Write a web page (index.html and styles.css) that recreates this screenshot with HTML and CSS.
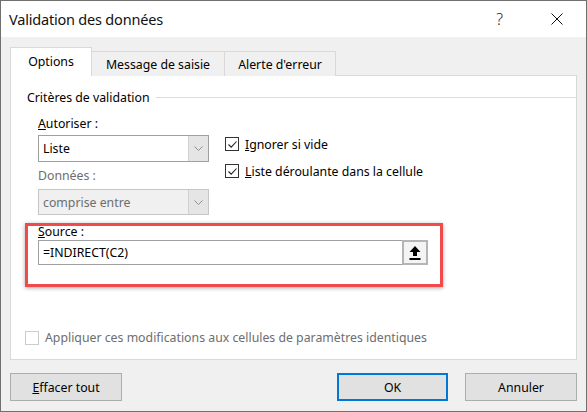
FILE: index.html
```html
<!DOCTYPE html>
<html lang="fr">
<head>
<meta charset="utf-8">
<title>Validation des données</title>
<link rel="stylesheet" href="styles.css">
</head>
<body>
<div class="window">
  <div class="titlebar">
    <span class="title">Validation des données</span>
    <span class="help">?</span>
    <svg class="close" width="12" height="12" viewBox="0 0 12 12"><path d="M0.5 0.5 L11.5 11.5 M11.5 0.5 L0.5 11.5" stroke="#111" stroke-width="1" fill="none"/></svg>
  </div>
  <div class="content">
    <div class="tabs">
      <div class="tab active">Options</div>
      <div class="tab">Message de saisie</div>
      <div class="tab">Alerte d'erreur</div>
    </div>
    <div class="panel">
      <div class="group-head"><span>Critères de validation</span><span class="rule"></span></div>
      <div class="criteria">
        <div class="col-left">
          <div class="label"><u>A</u>utoriser :</div>
          <div class="select">
            <span class="value">Liste</span>
            <span class="drop"><svg width="9" height="5" viewBox="0 0 9 5"><path d="M0.5 0.5 L4.5 4.5 L8.5 0.5" stroke="#8f8f8f" fill="none"/></svg></span>
          </div>
          <div class="label disabled lbl2">Données :</div>
          <div class="select disabled-select">
            <span class="value">comprise entre</span>
            <span class="drop"><svg width="9" height="5" viewBox="0 0 9 5"><path d="M0.5 0.5 L4.5 4.5 L8.5 0.5" stroke="#8f8f8f" fill="none"/></svg></span>
          </div>
        </div>
        <div class="col-right">
          <div class="check-row">
            <span class="box"><svg width="11" height="11" viewBox="0 0 11 11"><path d="M1.5 5.5 L4.2 8.2 L9.5 2.5" stroke="#222" stroke-width="1.1" fill="none"/></svg></span>
            <span><u>I</u>gnorer si vide</span>
          </div>
          <div class="check-row">
            <span class="box"><svg width="11" height="11" viewBox="0 0 11 11"><path d="M1.5 5.5 L4.2 8.2 L9.5 2.5" stroke="#222" stroke-width="1.1" fill="none"/></svg></span>
            <span><u>L</u>iste déroulante dans la cellule</span>
          </div>
        </div>
      </div>
      <div class="source-box">
        <div class="label"><u>S</u>ource :</div>
        <div class="input">
          <span class="value">=INDIRECT(C2)</span>
          <span class="ref-btn"><svg width="12" height="14" viewBox="0 0 12 14"><path d="M6 0 L11.5 6 L8 6 L8 10 L4 10 L4 6 L0.5 6 Z" fill="#000"/><rect x="0.5" y="12" width="11" height="2" fill="#000"/></svg></span>
        </div>
      </div>
      <div class="apply">
        <span class="box off"></span>
        <span>Appliquer ces modifications aux cellules de paramètres identiques</span>
      </div>
    </div>
    <div class="buttons">
      <div class="btn"><u>E</u>ffacer tout</div>
      <div class="spacer"></div>
      <div class="btn ok">OK</div>
      <div class="btn">Annuler</div>
    </div>
  </div>
</div>
</body>
</html>
```
FILE: styles.css
```css
* { box-sizing: border-box; }
html, body { margin: 0; padding: 0; }
body {
  font-family: "Noto Sans", "Open Sans", sans-serif;
  font-size: 12.3px;
  color: #000;
  background: #fff;
}
.window {
  width: 587px;
  height: 412px;
  border: 1px solid #707070;
  background: #f0f0f0;
  display: flex;
  flex-direction: column;
}
.titlebar {
  height: 36px;
  background: #fff;
  display: flex;
  align-items: center;
  padding-left: 8px;
}
.title {
  font-size: 14.5px;
  color: #111;
  flex: 1;
  letter-spacing: -0.2px;
}
.help {
  font-size: 16px;
  color: #222;
  margin-right: 48px;
  font-weight: 300;
}
.close { margin-right: 23px; }
.content {
  padding: 10px 9px 0 9px;
  flex: 1;
  display: flex;
  flex-direction: column;
}
.tabs {
  display: flex;
  align-items: flex-end;
  height: 28px;
  position: relative;
  z-index: 1;
}
.tab {
  height: 25px;
  border: 1px solid #d9d9d9;
  border-bottom: none;
  background: #f0f0f0;
  display: flex;
  align-items: center;
  justify-content: center;
  margin-bottom: -1px;
  color: #000;
}
.tab:nth-child(2) { width: 133px; border-left: none; }
.tab:nth-child(3) { width: 111px; border-left: none; }
.tab.active {
  width: 82px;
  height: 29px;
  background: #fff;
  padding-bottom: 2px;
}
.panel {
  background: #fff;
  border: 1px solid #d9d9d9;
  height: 285px;
  width: 567px;
  padding: 13px 0 0 16px;
  display: flex;
  flex-direction: column;
}
.group-head {
  display: flex;
  align-items: center;
  height: 16px;
  color: #000;
}
.rule {
  flex: 1;
  height: 1px;
  background: #dcdcdc;
  margin-left: 6px;
}
.criteria {
  display: flex;
  padding-left: 11px;
  margin-top: 11px;
}
.col-left { width: 171px; display: flex; flex-direction: column; }
.label { height: 16px; line-height: 16px; }
.label.disabled { color: #6d6d6d; }
.lbl2 { margin-top: 6px; }
.select {
  margin-top: 3px;
  height: 27px;
  border: 1px solid #a0a0a0;
  display: flex;
  align-items: stretch;
  background: #fff;
}
.select .value {
  flex: 1;
  padding-left: 4px;
  display: flex;
  align-items: center;
}
.select .drop {
  width: 20px;
  background: #e5e5e5;
  border-left: 1px solid #d0d0d0;
  display: flex;
  align-items: center;
  justify-content: center;
}
.disabled-select {
  height: 26px;
  margin-top: 5px;
  background: #f0f0f0;
  border-color: #c6c6c6;
  color: #6d6d6d;
}
.col-right {
  margin-left: 16px;
  padding-top: 20px;
  display: flex;
  flex-direction: column;
  gap: 11px;
}
.check-row {
  display: flex;
  align-items: center;
  gap: 6px;
  height: 16px;
}
.box {
  width: 14px;
  height: 14px;
  border: 1px solid #333;
  background: #fff;
  display: flex;
  align-items: center;
  justify-content: center;
}
.box.off { border-color: #cccccc; }
.source-box {
  margin-top: 8px;
  margin-left: -2px;
  width: 418px;
  height: 64px;
  border: 3px solid #f14a4a;
  box-shadow: 0 1px 4px rgba(0,0,0,0.35);
  padding: 0 0 0 10px;
  display: flex;
  flex-direction: column;
}
.source-box .label { margin-top: -2px; }
.input {
  margin-top: 0;
  width: 390px;
  height: 25px;
  border: 1px solid #a0a0a0;
  display: flex;
  background: #fff;
}
.input .value {
  flex: 1;
  padding-left: 4px;
  display: flex;
  align-items: center;
}
.ref-btn {
  width: 26px;
  margin: -1px -1px -1px 0;
  border: 2px solid #b5b5b5;
  background: #f4f4f4;
  display: flex;
  align-items: center;
  justify-content: center;
}
.apply {
  margin-top: 42px;
  margin-left: -2px;
  display: flex;
  align-items: center;
  gap: 6px;
  color: #6d6d6d;
}
.buttons {
  display: flex;
  margin-top: 13px;
  gap: 17px;
}
.spacer { flex: 1; }
.btn {
  width: 112px;
  height: 28px;
  background: #e1e1e1;
  border: 1px solid #adadad;
  display: flex;
  align-items: center;
  justify-content: center;
}
.btn.ok {
  width: 111px;
  border: 2px solid #0078d7;
}
```
